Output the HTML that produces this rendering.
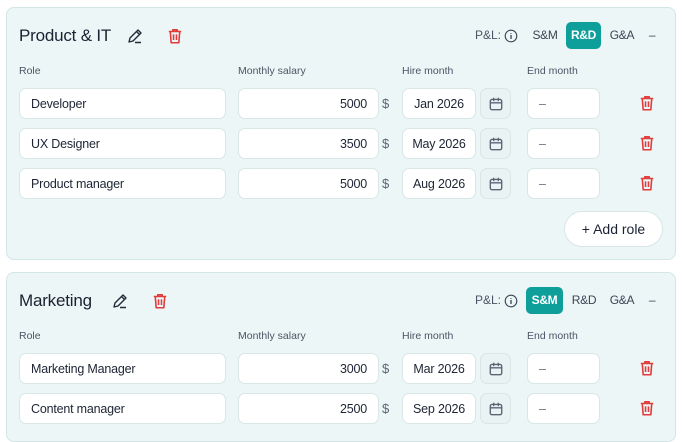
<!DOCTYPE html>
<html><head><meta charset="utf-8"><style>
*{box-sizing:border-box;margin:0;padding:0}
body{width:682px;height:431px;overflow:hidden;background:#fff;font-family:"Liberation Sans",sans-serif;color:#1d2433;position:relative}
.card{position:absolute;left:6px;width:670px;background:#edf6f6;border:1px solid #d3e5e5;border-radius:8px}
.abs{position:absolute}
.title{font-size:17px;font-weight:500;color:#1a2233;letter-spacing:-0.2px}
.lbl{font-size:10.5px;color:#4a5566}
.inp{position:absolute;height:31px;background:#fff;border:1px solid #d8e6e6;border-radius:7px;font-size:12.5px;line-height:30px;color:#1d2433;letter-spacing:-0.2px}
.cal{position:absolute;width:31px;height:31px;border:1px solid #d8e6e6;border-radius:7px;background:#eaf3f3}
.pl{position:absolute;font-size:12px;color:#4a5566;line-height:27px}
.btn{position:absolute;height:27px;line-height:27px;font-size:12px;color:#3a4556;text-align:center;border-radius:5px;letter-spacing:-0.3px}
.on{background:#0e9f9b;color:#fff;font-weight:bold}
</style></head><body>
<svg width="0" height="0" style="position:absolute"><defs>
<symbol id="tr" viewBox="0 0 16 16"><path d="M2.5 4h11M6 4V2.5h4V4M3.8 4l.8 10h6.8l.8-10M6.7 6.5v5M9.3 6.5v5" fill="none" stroke="#e03a3a" stroke-width="1.4" stroke-linejoin="round"/></symbol>
<symbol id="pen" viewBox="0 0 18 18"><path d="M3 15l1-4 8-8 3 3-8 8-4 1zM10.5 4.5l3 3M9 15.5h6" fill="none" stroke="#222b3a" stroke-width="1.4" stroke-linejoin="round"/></symbol>
<symbol id="cl" viewBox="0 0 14 14"><rect x="2" y="3" width="10" height="9" rx="1.5" fill="none" stroke="#5a6676" stroke-width="1.2"/><path d="M2 6h10M5 1.5v3M9 1.5v3" stroke="#5a6676" stroke-width="1.2"/></symbol>
<symbol id="inf" viewBox="0 0 14 14"><circle cx="7" cy="7" r="5.8" fill="none" stroke="#3a4556" stroke-width="1.1"/><path d="M7 6v4M7 4v.8" stroke="#3a4556" stroke-width="1.3"/></symbol>
</defs></svg>

<div class="card" style="top:7px;height:253px"></div>
<div class="card" style="top:272px;height:170px"></div>

<div class="abs title" style="left:19px;top:26px">Product &amp; IT</div>
<svg class="abs" style="left:126px;top:27px" width="18" height="18"><use href="#pen"/></svg>
<svg class="abs" style="left:166px;top:27px" width="18" height="18"><use href="#tr"/></svg>
<div class="pl" style="left:475px;top:22px">P&amp;L:</div>
<svg class="abs" style="left:504px;top:29px" width="14" height="14"><use href="#inf"/></svg>
<div class="btn" style="left:530px;top:22px;width:30px">S&amp;M</div>
<div class="btn on" style="left:566px;top:22px;width:35px">R&amp;D</div>
<div class="btn" style="left:607px;top:22px;width:30px">G&amp;A</div>
<div class="btn" style="left:644px;top:22px;width:16px">–</div>

<div class="abs lbl" style="left:19px;top:65px">Role</div>
<div class="abs lbl" style="left:238px;top:65px">Monthly salary</div>
<div class="abs lbl" style="left:402px;top:65px">Hire month</div>
<div class="abs lbl" style="left:527px;top:65px">End month</div>

<div class="abs" style="left:564px;top:211px;width:99px;height:36px;background:#fff;border:1px solid #d8e6e6;border-radius:18px;font-size:14px;line-height:34px;text-align:center;color:#1a2233">+ Add role</div>

<div class="abs title" style="left:19px;top:291px">Marketing</div>
<svg class="abs" style="left:111px;top:292px" width="18" height="18"><use href="#pen"/></svg>
<svg class="abs" style="left:151px;top:292px" width="18" height="18"><use href="#tr"/></svg>
<div class="pl" style="left:475px;top:287px">P&amp;L:</div>
<svg class="abs" style="left:504px;top:294px" width="14" height="14"><use href="#inf"/></svg>
<div class="btn on" style="left:526px;top:287px;width:37px">S&amp;M</div>
<div class="btn" style="left:569px;top:287px;width:30px">R&amp;D</div>
<div class="btn" style="left:607px;top:287px;width:30px">G&amp;A</div>
<div class="btn" style="left:644px;top:287px;width:16px">–</div>

<div class="abs lbl" style="left:19px;top:330px">Role</div>
<div class="abs lbl" style="left:238px;top:330px">Monthly salary</div>
<div class="abs lbl" style="left:402px;top:330px">Hire month</div>
<div class="abs lbl" style="left:527px;top:330px">End month</div>

<script>
function row(y,role,sal,hire){
return `<div class="inp" style="left:19px;top:${y}px;width:207px;padding-left:11px">${role}</div>
<div class="inp" style="left:238px;top:${y}px;width:141px;text-align:right;padding-right:11px">${sal}</div>
<div class="abs" style="left:382px;top:${y+8}px;font-size:13px;color:#5a6676">$</div>
<div class="inp" style="left:402px;top:${y}px;width:74px;text-align:center">${hire}</div>
<div class="cal" style="left:480px;top:${y}px"><svg style="position:absolute;left:7px;top:7px" width="16" height="16" viewBox="0 0 14 14"><use href="#cl"/></svg></div>
<div class="inp" style="left:527px;top:${y}px;width:73px;padding-left:11px;color:#6a7585">–</div>
<svg class="abs" style="left:638px;top:${y+6}px" width="18" height="18"><use href="#tr"/></svg>`;}
document.write(row(88,"Developer","5000","Jan 2026")+row(128,"UX Designer","3500","May 2026")+row(168,"Product manager","5000","Aug 2026")+row(353,"Marketing Manager","3000","Mar 2026")+row(393,"Content manager","2500","Sep 2026"));
</script>
</body></html>
